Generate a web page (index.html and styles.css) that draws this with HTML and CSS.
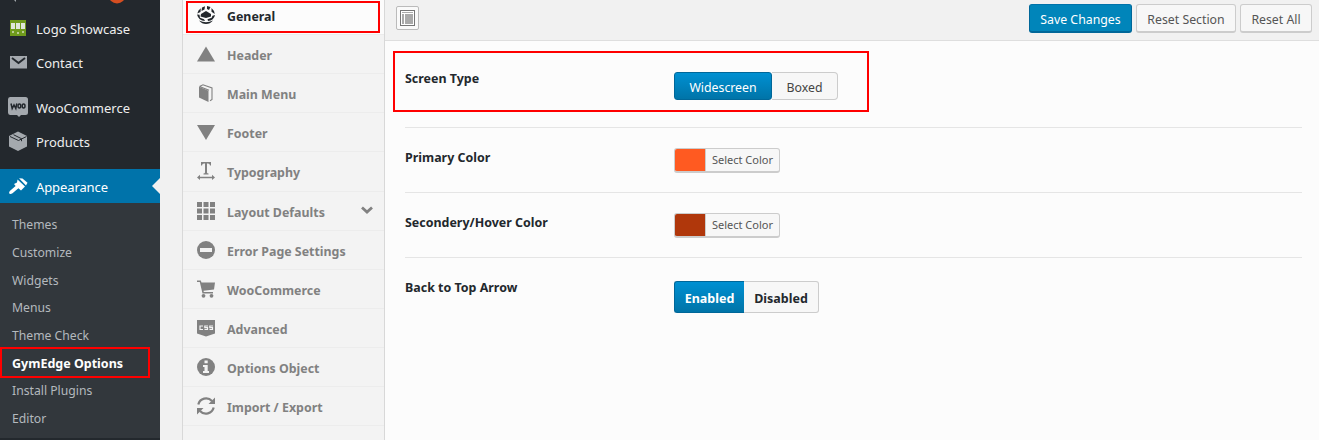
FILE: index.html
```
<!DOCTYPE html>
<html lang="en">
<head>
<meta charset="utf-8">
<title>GymEdge Options</title>
<link rel="stylesheet" href="styles.css">
</head>
<body>
<div class="app">
  <aside class="sidebar">
    <div class="cut-row">
      <svg width="160" height="12" viewBox="0 0 160 12"><path d="M14 0l2 2v-2z" fill="#a0a5aa"/><circle cx="117" cy="-5" r="8.5" fill="#d54e21"/></svg>
    </div>
    <a class="item"><svg class="ico" viewBox="0 0 20 20"><path fill="#6f9a1c" d="M2 1h16v16H2z"/><path fill="#dfe5da" d="M3 4h4v6H3zM8 4h4v6H8zM13 4h4v6h-4z"/><path fill="#b9cb91" d="M4 12h2v2H4zM9 13h2v2H9zM14 12h2v2h-2z"/></svg><span>Logo Showcase</span></a>
    <a class="item"><svg class="ico" viewBox="0 0 20 20"><path fill="#a4a9ae" d="M2 3h17v12.500H2z"/><path fill="none" stroke="#23282d" stroke-width="1.900" d="M4 5l6.500 5L17 5"/></svg><span>Contact</span></a>
    <div class="sep"></div>
    <a class="item"><svg class="ico" viewBox="0 0 20 20"><path fill="#a4a9ae" d="M2 -1h15.500q2.500 0 2.500 2.500v13q0 2.500-2.500 2.500H13l-2 2-2-2H2q-2-.2-2-2.500v-13Q0-1 2-1z"/><g fill="none" stroke="#23282d" stroke-width="1.500"><path d="M3 5.500l1.200 5L6 7l1.800 3.500 1-5"/><ellipse cx="11.400" cy="8" rx="1.400" ry="2"/><ellipse cx="15.600" cy="8" rx="1.400" ry="2"/></g></svg><span>WooCommerce</span></a>
    <a class="item"><svg class="ico" viewBox="0 0 20 20"><path fill="#a4a9ae" d="M10 -.5l9 4.500v10.500L10 19l-9-4.500V4z"/><path fill="none" stroke="#23282d" d="M2 4.500l8.500 4L18.500 4.500M5.500 2.700l8 4v2.500"/></svg><span>Products</span></a>
    <div class="sep sep-last"></div>
    <a class="item current"><svg class="ico" viewBox="0 0 20 20"><path fill="#fff" d="M9.500 2.500L17 9.500l-4 4-2.600-2.300L4.500 16.200q-1.700 1.200-3 .5-1-1 .3-2.700L7.600 9 6 7l3-1.500z"/><path fill="#fff" d="M11 1.200l3.500.4 5 4.200L18 8.500z"/></svg><span>Appearance</span></a>
    <nav class="submenu">
      <a>Themes</a><a>Customize</a><a>Widgets</a><a>Menus</a><a>Theme Check</a>
      <a class="active">GymEdge Options</a><a>Install Plugins</a><a>Editor</a>
      <div class="mark mark-side"></div>
    </nav>
  </aside>

  <nav class="tabs">
    <a class="tab on"><svg class="ti" viewBox="0 0 18 18"><g fill="#23282d"><path d="M5 1.500L8 .2 7.500 3.500 4.500 5zM10 0l3.500 1-1.500 3-2-1zM1.500 4.500L3.800 2.300 3.500 6 .3 7.500zM14.500 2l2.500 3 .8 3-3.300-2.300z"/><path d="M4 8l5-3 5 3v2.500L9 12 3.500 10.500z"/><path d="M0 8.500l2.500.3.500 3 4 1.500 1 1.700Q1.500 14.500 0 8.500zM18 9l-2.500.8-.8 2-4.200 1.500.5 1.700Q17 14.500 18 9z"/><path d="M2 14.500q7 3.300 14 0Q13 18 9 18t-7-3.500z"/></g></svg><span>General</span></a>
    <a class="tab"><svg class="ti" viewBox="0 0 18 18"><path d="M9 1.500l9 15H0z"/></svg><span>Header</span></a>
    <a class="tab"><svg class="ti" viewBox="0 0 18 18"><path d="M2 2.800l9.500 4V18L2 13.500z"/><path d="M2.500 2.500L6 .8 15 4v11.500l-2 1.300M2.500 2.500L12 6.200" fill="none" stroke="#818181" stroke-width="1.100"/></svg><span>Main Menu</span></a>
    <a class="tab"><svg class="ti" viewBox="0 0 18 18"><path d="M0 2h18L9 17z"/></svg><span>Footer</span></a>
    <a class="tab"><svg class="ti" viewBox="0 0 18 18"><path d="M4 0h10v3.500h-1q-.2-2-2-2h-1v9q0 1 1.500 1v1H6.500v-1q1.500 0 1.500-1v-9H7q-1.800 0-2 2H4zM3 14.700h12v-2l3 2.700-3 2.600v-1.800H3V18l-3-2.600 3-2.700z"/></svg><span>Typography</span></a>
    <a class="tab"><svg class="ti" viewBox="0 0 18 18"><path d="M0 0h5v5H0zM6.500 0h5v5h-5zM13 0h5v5h-5zM0 6.500h5v5H0zM6.500 6.500h5v5h-5zM13 6.500h5v5h-5zM0 13h5v5H0zM6.500 13h5v5h-5zM13 13h5v5h-5z"/></svg><span>Layout Defaults</span><svg class="chev" viewBox="0 0 12 8"><path d="M1 1.500l5 4.500 5-4.500" fill="none" stroke="#818181" stroke-width="2.800"/></svg></a>
    <a class="tab"><svg class="ti" viewBox="0 0 18 18"><circle cx="9" cy="9" r="9"/><path fill="#f3f3f3" d="M3 7h12v4H3z"/></svg><span>Error Page Settings</span></a>
    <a class="tab"><svg class="ti" viewBox="0 0 18 18"><path d="M0 .5h3.800l.7 2H18l-1 7-10.500 1.200.3 1.300H16v1.500H5.500L2.800 2H0z"/><circle cx="6.500" cy="15.800" r="1.900"/><circle cx="14.500" cy="15.800" r="1.900"/></svg><span>WooCommerce</span></a>
    <a class="tab"><svg class="ti" viewBox="0 0 18 18"><path d="M0 1h18v13.500l-9 3-9-3z"/><path fill="none" stroke="#f3f3f3" stroke-width="1.200" d="M6 7H3v3.500h3M11 7H7.800v1.700h2.700v1.800h-3M16 7h-3.200v1.700h2.700v1.800h-3"/></svg><span>Advanced</span></a>
    <a class="tab"><svg class="ti" viewBox="0 0 18 18"><circle cx="9" cy="9" r="9"/><path fill="#f3f3f3" d="M7.500 2.500h3.200v2.700H7.500zM6 7h4.700v6H12v2H6v-2h1.500V9H6z"/></svg><span>Options Object</span></a>
    <a class="tab"><svg class="ti" viewBox="0 0 18 18"><path fill="none" stroke="#818181" stroke-width="2.200" d="M1.300 7.500A8 8 0 0 1 15 4M16.700 10.500A8 8 0 0 1 3 14"/><path d="M18 .5v6.500h-6.500zM0 17.500V11h6.500z"/></svg><span>Import / Export</span></a>
    <div class="mark mark-tab"></div>
  </nav>

  <main class="panel">
    <header class="bar">
      <button class="expand"><svg width="15" height="16" viewBox="0 0 15 16"><rect x=".5" y=".5" width="14" height="15" fill="#fff" stroke="#777"/><path fill="#aaa" d="M2 2h11v1H2zM2 4h2v10H2zM5 4h8v10H5z"/></svg></button>
      <div class="actions"><button class="btn save">Save Changes</button><button class="btn rs">Reset Section</button><button class="btn ra">Reset All</button></div>
    </header>
    <section class="fields">
      <div class="field first"><h4>Screen Type</h4><div class="set"><button class="wide">Widescreen</button><button class="boxed">Boxed</button></div><div class="mark mark-field"></div></div>
      <div class="field"><h4>Primary Color</h4><button class="picker"><i class="swatch orange"></i><span>Select Color</span></button></div>
      <div class="field"><h4>Secondery/Hover Color</h4><button class="picker"><i class="swatch rust"></i><span>Select Color</span></button></div>
      <div class="field last"><h4>Back to Top Arrow</h4><div class="switch"><b class="yes">Enabled</b><b class="no">Disabled</b></div></div>
    </section>
  </main>
</div>
</body>
</html>
```
FILE: styles.css
```
* { box-sizing: border-box; }
body { margin: 0; background: #f1f1f1; font-family: "Noto Sans", "Open Sans", sans-serif; overflow: hidden; }
button { font-family: inherit; padding: 0; margin: 0; }
svg { display: block; flex: none; overflow: visible; }
.app { display: flex; height: 440px; }

.sidebar { width: 160px; background: #23282d; flex: none; }
.cut-row { height: 12px; }
.item { display: flex; align-items: center; height: 34px; padding-left: 8px; font-size: 13px; color: #eee; position: relative; white-space: nowrap; }
.item span { margin-left: 8px; }
.ico { width: 20px; height: 20px; }
.sep { height: 11px; }
.sep-last { height: 10px; }
.current { background: #0073aa; color: #fff; padding-top: 1px; letter-spacing: -.1px; }
.current::after { content: ""; position: absolute; right: 0; top: 9px; border: 8px solid transparent; border-right-color: #f1f1f1; border-left: 0; }
.submenu { height: 235px; background: #32373c; padding-top: 8px; position: relative; }
.submenu a { display: flex; align-items: center; height: 27.700px; padding-left: 12px; font-size: 12.200px; color: #b4b9be; white-space: nowrap; }
.submenu a.active { color: #fff; font-weight: 700; font-size: 12.500px; }

.mark { position: absolute; border: 2px solid #f00; pointer-events: none; }
.mark-side { left: 0; top: 144px; width: 150px; height: 31px; }
.mark-tab { left: 3px; top: 1px; width: 194px; height: 32px; }
.mark-field { left: -12px; top: 10px; width: 476px; height: 61px; }

.tabs { width: 203px; margin-left: 22px; background: #f3f3f3; border-left: 1px solid #d8d8d8; border-right: 1px solid #d8d8d8; position: relative; flex: none; }
.tab { display: flex; align-items: center; height: 39.150px; padding: 1px 11px 0 14px; border-bottom: 1px solid #ececec; color: #818181; fill: #818181; font-size: 12.400px; font-weight: 700; white-space: nowrap; }
.tab span { margin-left: 12px; padding-top: 2px; }
.tab.on { height: 35px; padding-bottom: 4px; background: #fcfcfc; color: #23282d; }
.ti { width: 18px; height: 18px; margin-top: -1px; }
.chev { width: 12px; height: 8px; margin-left: auto; margin-top: -2px; }

.panel { flex: 1; background: #fcfcfc; min-width: 0; }
.bar { height: 41px; background: #f1f1f1; border-bottom: 1px solid #dedede; display: flex; justify-content: space-between; padding: 4px 7px 0 11px; }
.expand { width: 23px; height: 24px; margin-top: 2px; background: #fafafa; border: 1px solid #bbb; border-radius: 2px; display: flex; align-items: center; justify-content: center; }
.actions { display: flex; gap: 4px; }
.btn { height: 29px; border: 1px solid #ccc; border-bottom-width: 2px; border-radius: 3px; background: #f7f7f7; color: #555; font-size: 12.300px; padding-top: 2px; white-space: nowrap; }
.save { width: 103px; background: #0085ba; border-color: #0073aa #006799 #006799; color: #fff; }
.rs { width: 100px; }
.ra { width: 72px; }

.fields { padding: 0 17px 0 20px; }
.field { height: 65px; border-bottom: 1px solid #e5e5e5; display: flex; position: relative; }
.field.first { height: 87px; }
.field.last { border: 0; }
.field h4 { width: 269px; margin: 21px 0 0; font-size: 12.450px; line-height: 18px; color: #23282d; white-space: nowrap; }
.field.first h4 { margin-top: 29px; }
.set { display: flex; margin-top: 31px; height: 28px; }
.set button { font-size: 12.300px; padding-top: 2px; border: 1px solid #ccc; }
.wide { width: 98px; background: linear-gradient(#0090d2, #0074a8); color: #fff; }
.set .wide { border-color: #006799; border-radius: 3px; }
.boxed { width: 66px; border-radius: 0 4px 4px 0; background: #f7f7f7; color: #444; }
.set .boxed { border-left: 0; }
.picker { width: 106px; height: 25px; margin-top: 20px; display: flex; border: 1px solid #ccc; border-bottom-width: 2px; border-radius: 3px; background: #f7f7f7; color: #555; font-size: 11px; overflow: hidden; }
.picker span { flex: 1; align-self: center; white-space: nowrap; padding-bottom: 1px; }
.swatch { width: 31px; height: 100%; border-right: 1px solid #ccc; }
.orange { background: #ff5a21; }
.rust { background: #b0370b; }
.switch { display: flex; margin-top: 23px; height: 32px; font-size: 12.500px; line-height: 33px; text-align: center; }
.yes { width: 70px; background: linear-gradient(#0090d2, #0074a8); border: 1px solid #006799; border-right: 0; border-radius: 3px 0 0 3px; color: #fff; }
.no { width: 75px; background: #f7f7f7; border: 1px solid #ccc; border-left: 0; border-radius: 0 3px 3px 0; color: #23282d; }
```
